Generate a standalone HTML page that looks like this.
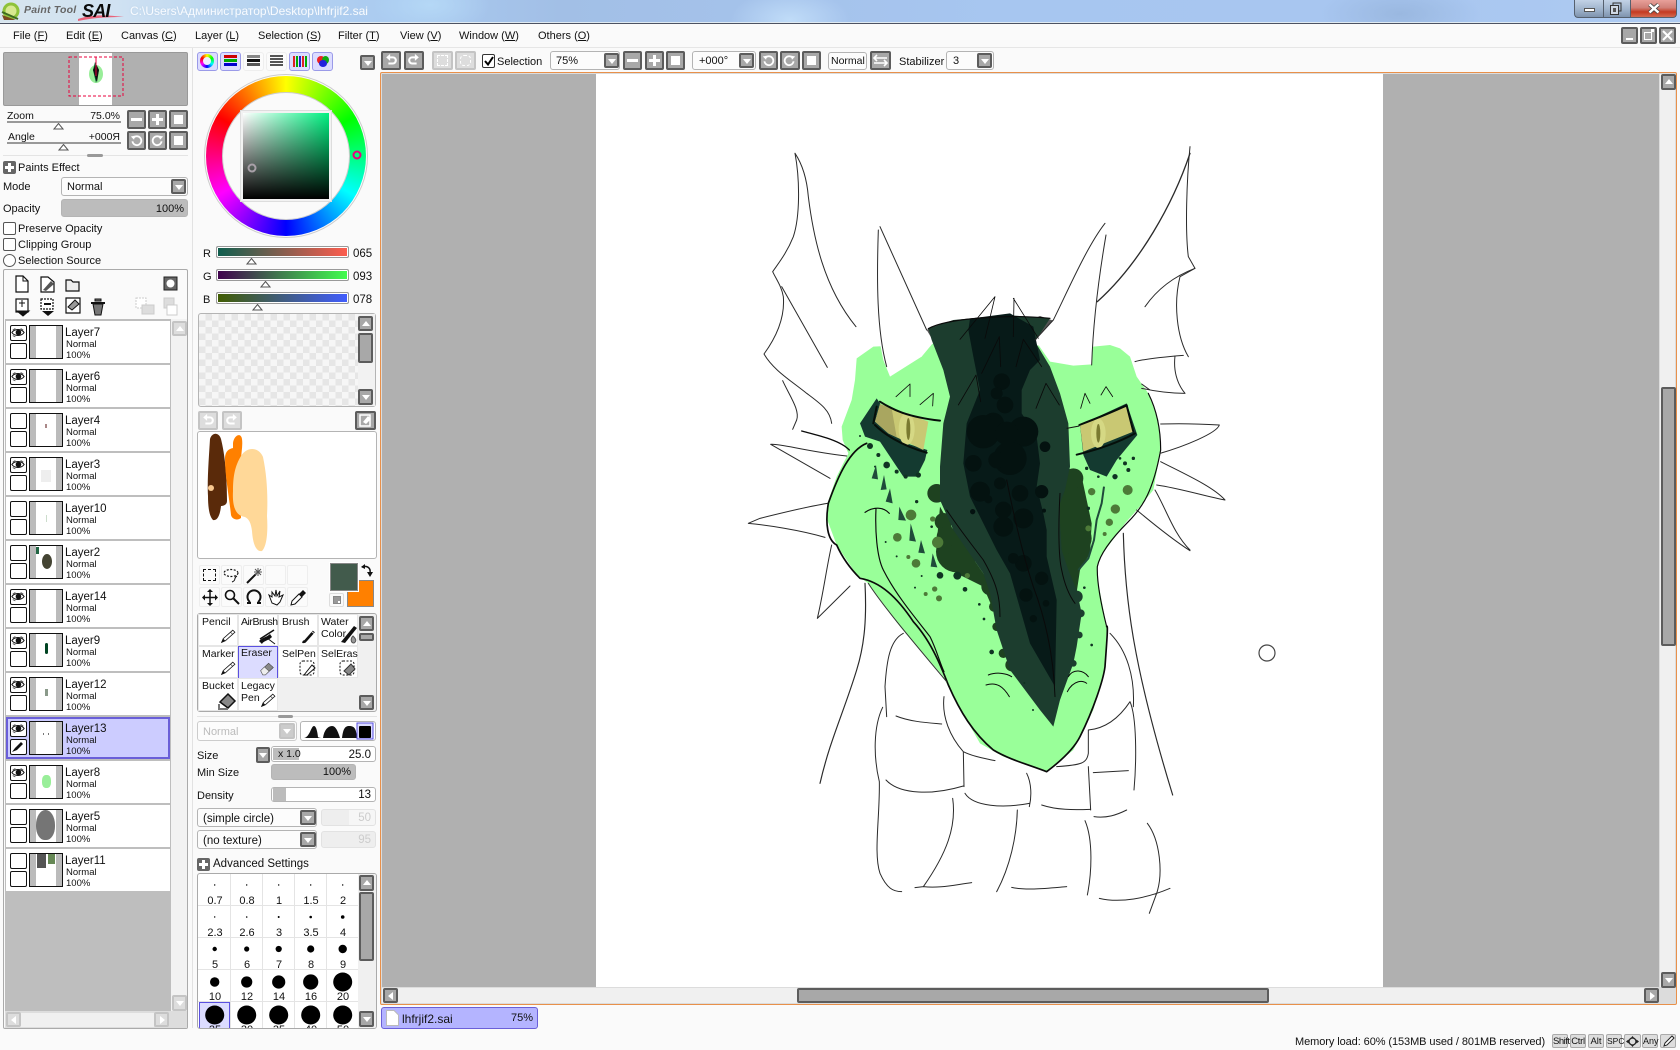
<!DOCTYPE html>
<html><head><meta charset="utf-8"><title>PaintTool SAI</title>
<style>
html,body{margin:0;padding:0;background:#fafafa}
#r{position:relative;width:1680px;height:1050px;overflow:hidden;background:#fafafa;font:11px/14px "Liberation Sans","Noto Sans CJK SC",sans-serif;color:#111}
#r div,#r span.a,#r svg.a{position:absolute;box-sizing:border-box}
.t{white-space:nowrap}
.b{background:#a8a8a8;border:2px solid #5c5c5c;border-radius:2px}
.g{background:#ddd;border:2px solid #c4c4c4;border-radius:2px}
.dn::after,.up::after,.lf::after,.rt::after{content:"";position:absolute;left:50%;top:50%;width:0;height:0}
.dn::after{margin:-2px 0 0 -4px;border:4px solid transparent;border-top:5px solid #fff;border-bottom:0}
.up::after{margin:-3px 0 0 -4px;border:4px solid transparent;border-bottom:5px solid #fff;border-top:0}
.lf::after{margin:-4px 0 0 -3px;border:4px solid transparent;border-right:5px solid #fff;border-left:0}
.rt::after{margin:-4px 0 0 -2px;border:4px solid transparent;border-left:5px solid #fff;border-right:0}
.f{background:#fcfcfc;border:1px solid #b4b4b4;border-radius:3px}
.m{top:29px;white-space:nowrap;height:14px}
.l{left:6px;width:164px;height:42px;background:#fff}
.l.s{background:#ccccff;border:2px solid #6a5fd8;outline:0}
.e{left:4px;top:4px;width:17px;height:16px;border:1.5px solid #111;border-radius:2px;background:#fff}
.e2{top:22px}
.th{left:23px;top:4px;width:34px;height:34px;border:1.5px solid #111;background:linear-gradient(90deg,#bbb 0 6px,#fff 6px 26px,#bbb 26px);overflow:hidden}
.n1{left:59px;top:5px;font-size:11.5px;white-space:nowrap}
.n2{left:60px;top:17px;font-size:9.5px;white-space:nowrap}
.n3{left:60px;top:28px;font-size:9.5px;white-space:nowrap}
.tool{background:#fbfbfb;border:1px solid #eee;border-radius:2px}
.cell{font-size:10.5px;line-height:12px;background:#fff;border:1px solid #e6e6e6;white-space:nowrap}
.sz{position:absolute;font-size:11px;width:32px;text-align:center;white-space:nowrap}
.kb{top:1034px;height:14px;font-size:9.5px;line-height:13px;text-align:center;background:#ddd;border:1px solid #aaa;border-radius:2px}
</style></head><body><div id="r">

<!-- title bar -->
<div style="left:0;top:0;width:1680px;height:23px;background:radial-gradient(60px 30px at 430px 5px,#b5d8f6,transparent),radial-gradient(80px 30px at 1400px 14px,#9ab8e0,transparent),radial-gradient(60px 30px at 790px 20px,#c0dcf8,transparent),linear-gradient(90deg,#d7e5ee 0,#d0e2f2 115px,#b8d4f0 240px,#a9caf0 400px,#a2bfe6 560px,#a7c6f0 1000px,#a8c6f0 1400px,#aecbf2 1680px)"></div>
<div style="left:0;top:22px;width:1680px;height:1px;background:#dfeaf2"></div>
<div style="left:0;top:23px;width:1680px;height:1px;background:#4c5262"></div>
<svg class="a" style="left:0;top:0" width="130" height="23"><circle cx="11" cy="11" r="8.5" fill="#8fc23a"/><circle cx="11" cy="11" r="5.5" fill="#d8e890"/><path d="M2 15L16 20L4 20Z" fill="#7a4a20"/><path d="M2 12L18 19" stroke="#3d6b20" stroke-width="2"/><path d="M78 19C92 14 108 15 124 17C106 17 92 18 78 21Z" fill="#e8637a"/></svg>
<div class="t" style="left:24px;top:3px;font-size:10.5px;font-style:italic;letter-spacing:.2px;color:#666;font-weight:bold">Paint Tool</div>
<div class="t" style="left:82px;top:1px;font-size:18px;line-height:20px;font-style:italic;font-weight:bold;color:#0a0a0a;letter-spacing:-.8px">SAI</div>
<div class="t" style="left:130px;top:4px;font-size:12px;color:#f8fbff;text-shadow:0 0 2px #b8d0e8">C:\Users\Администратор\Desktop\lhfrjif2.sai</div>

<!-- window controls -->
<div style="left:1574px;top:0;width:29px;height:18px;background:linear-gradient(#c2d2e6,#a0b4cc 55%,#7f94ae);border:1px solid #56606e;border-top:0;border-right:0;border-radius:0 0 0 4px"></div>
<div style="left:1603px;top:0;width:27px;height:18px;background:linear-gradient(#c2d2e6,#a0b4cc 55%,#7f94ae);border:1px solid #56606e;border-top:0;border-right:0"></div>
<div style="left:1630px;top:0;width:47px;height:18px;background:linear-gradient(#e8a09a,#d08078 45%,#c43a22 70%,#d46a50);border:1px solid #56606e;border-top:0;border-radius:0 0 4px 0"></div>
<div style="left:1584px;top:8px;width:11px;height:4px;background:#fff;border:1px solid #555"></div>
<svg class="a" style="left:1609px;top:2px" width="14" height="13"><rect x="4" y="1" width="8" height="8" fill="none" stroke="#333"/><rect x="1.5" y="3.5" width="8" height="9" fill="#cfd8e4" stroke="#333"/><rect x="4" y="6" width="3" height="4" fill="#555"/></svg>
<svg class="a" style="left:1648px;top:3px" width="12" height="11"><path d="M1.5 1.5L10.5 9.5M10.5 1.5L1.5 9.5" stroke="#444" stroke-width="4"/><path d="M1.5 1.5L10.5 9.5M10.5 1.5L1.5 9.5" stroke="#fff" stroke-width="2.4"/></svg>

<!-- menu -->
<div class="m" style="left:13px">File (<u>F</u>)</div>
<div class="m" style="left:66px">Edit (<u>E</u>)</div>
<div class="m" style="left:121px">Canvas (<u>C</u>)</div>
<div class="m" style="left:195px">Layer (<u>L</u>)</div>
<div class="m" style="left:258px">Selection (<u>S</u>)</div>
<div class="m" style="left:338px">Filter (<u>T</u>)</div>
<div class="m" style="left:400px">View (<u>V</u>)</div>
<div class="m" style="left:459px">Window (<u>W</u>)</div>
<div class="m" style="left:538px">Others (<u>O</u>)</div>
<div style="left:0;top:47px;width:1680px;height:1px;background:#e6e6e6"></div>
<div class="b" style="left:1621px;top:27px;width:17px;height:17px"><div style="left:3px;top:9px;width:7px;height:2px;background:#fff"></div></div>
<div class="b" style="left:1640px;top:27px;width:17px;height:17px"><div style="left:2px;top:3px;width:8px;height:8px;border:1.5px solid #fff"></div><div style="left:9px;top:0;width:3px;height:3px;background:#fff"></div></div>
<svg class="a" style="left:1659px;top:27px;border:2px solid #5c5c5c;border-radius:2px;background:#a8a8a8;width:17px;height:17px" viewBox="0 0 13 13"><path d="M2 2L11 11M11 2L2 11" stroke="#fff" stroke-width="2"/></svg>

<!-- top toolbar -->
<svg width="0" height="0" style="position:absolute"><defs>
<symbol id="ccw" viewBox="0 0 16 16"><path d="M4 5h6a3.5 3.5 0 0 1 0 7H5" fill="none" stroke="#fff" stroke-width="2.4"/><path d="M7 1L2.5 5L7 9Z" fill="#fff"/></symbol>
<symbol id="cw" viewBox="0 0 16 16"><path d="M12 5H6a3.5 3.5 0 0 0 0 7h5" fill="none" stroke="#fff" stroke-width="2.4"/><path d="M9 1L13.5 5L9 9Z" fill="#fff"/></symbol>
<symbol id="rl" viewBox="0 0 16 16"><path d="M4 5a5.5 5.5 0 1 1-1 4" fill="none" stroke="#fff" stroke-width="2.2"/><path d="M1 3L6 2L5 7Z" fill="#fff"/></symbol>
<symbol id="rr" viewBox="0 0 16 16"><path d="M12 5a5.5 5.5 0 1 0 1 4" fill="none" stroke="#fff" stroke-width="2.2"/><path d="M15 3L10 2L11 7Z" fill="#fff"/></symbol>
<symbol id="eye" viewBox="0 0 16 13"><path d="M1 6.5C4 2 12 2 15 6.5C12 11 4 11 1 6.5Z" fill="#fff" stroke="#111" stroke-width="1.2"/><circle cx="8.5" cy="6.5" r="3.2" fill="#111"/><path d="M2 3.5L5 2M14 3.5L11 2M2 10L5 11.5" stroke="#555"/></symbol>
<symbol id="pen" viewBox="0 0 34 30"><path d="M5 26L8 19L26 3L30 7L12 23Z" fill="#fff" stroke="#111" stroke-width="1.5"/><path d="M5 26L8 19L12 23Z" fill="#111"/><path d="M22 7L26 11" stroke="#111"/></symbol>
<symbol id="brs" viewBox="0 0 34 30"><path d="M6 27C6 24 8 22 10 22L26 4L30 7L14 25C12 28 8 28 6 27Z" fill="#111"/><path d="M24 6L28 9" stroke="#fff" stroke-width="1.5"/></symbol>
<symbol id="ers" viewBox="0 0 34 30"><path d="M5 20L20 6L29 14L14 28H9Z" fill="#888" stroke="#333"/><path d="M5 20L12 13L21 21L14 28H9Z" fill="#eee" stroke="#555"/></symbol>
</defs></svg>

<div class="b" style="left:381px;top:51px;width:20px;height:19px"><svg class="a" style="left:1px;top:0" width="14" height="14"><use href="#ccw"/></svg></div>
<div class="b" style="left:404px;top:51px;width:20px;height:19px"><svg class="a" style="left:1px;top:0" width="14" height="14"><use href="#cw"/></svg></div>
<div class="g" style="left:432px;top:51px;width:21px;height:19px"><div style="left:3px;top:2px;width:11px;height:11px;border:1px dashed #fff"></div></div>
<div class="g" style="left:455px;top:51px;width:21px;height:19px"><div style="left:3px;top:2px;width:11px;height:11px;border:1px dashed #fff;border-radius:4px"></div></div>
<div style="left:482px;top:54px;width:13px;height:14px;background:#fff;border:1px solid #333;border-radius:2px"><svg class="a" style="left:1px;top:1px" width="10" height="10"><path d="M1 5L4 8.5L9 1" fill="none" stroke="#000" stroke-width="2"/></svg></div>
<div class="t" style="left:497px;top:55px">Selection</div>
<div class="f" style="left:550px;top:51px;width:70px;height:19px;padding:2px 0 0 5px">75%</div>
<div class="b dn" style="left:604px;top:53px;width:15px;height:15px"></div>
<div class="b" style="left:623px;top:51px;width:19px;height:19px"><div style="left:2px;top:6px;width:11px;height:3px;background:#fff"></div></div>
<div class="b" style="left:645px;top:51px;width:19px;height:19px"><div style="left:2px;top:6px;width:11px;height:3px;background:#fff"></div><div style="left:6px;top:2px;width:3px;height:11px;background:#fff"></div></div>
<div class="b" style="left:666px;top:51px;width:19px;height:19px"><div style="left:3px;top:3px;width:9px;height:9px;background:#fff"></div></div>
<div class="f" style="left:692px;top:51px;width:64px;height:19px;padding:2px 0 0 6px">+000°</div>
<div class="b dn" style="left:739px;top:53px;width:15px;height:15px"></div>
<div class="b" style="left:759px;top:51px;width:19px;height:19px"><svg class="a" style="left:1px;top:1px" width="13" height="13"><use href="#rl"/></svg></div>
<div class="b" style="left:780px;top:51px;width:20px;height:19px"><svg class="a" style="left:1px;top:1px" width="13" height="13"><use href="#rr"/></svg></div>
<div class="b" style="left:802px;top:51px;width:19px;height:19px"><div style="left:3px;top:3px;width:9px;height:9px;background:#fff"></div></div>
<div class="f t" style="left:828px;top:52px;width:39px;height:18px;padding:1px 0 0 2px;font-size:10.5px">Normal</div>
<div class="b" style="left:870px;top:51px;width:21px;height:19px"><svg class="a" style="left:1px;top:1px" width="15" height="13"><path d="M1 4H14M1 9H14M4 1L1 4L4 7M11 6L14 9L11 12" fill="none" stroke="#fff" stroke-width="1.6"/></svg></div>
<div class="t" style="left:899px;top:55px">Stabilizer</div>
<div class="f" style="left:946px;top:51px;width:48px;height:19px;padding:2px 0 0 6px">3</div>
<div class="b dn" style="left:977px;top:53px;width:15px;height:15px"></div>

<!-- canvas frame -->
<div style="left:380px;top:72px;width:1297px;height:933px;border:1px solid #e8904a;background:#dcdcdc;border-radius:2px"></div>
<div style="left:382px;top:74px;width:1277px;height:913px;background:#b0b0b0"></div>
<div style="left:596px;top:74px;width:787px;height:913px;background:#fff"></div>

<!-- artwork -->
<svg class="a" style="left:740px;top:130px;overflow:visible;filter:blur(.3px)" width="520" height="800" viewBox="0 0 1560 2400">
<path fill="#99ff99" d="M350,685 L400,650 L600,640 L1060,650 L1110,645 L1140,655 L1170,680 L1190,740 L1225,790 L1255,870 L1262,960 L1240,1080 L1195,1135 L1155,1180 L1085,1275 L1072,1310 L1075,1360 L1100,1490 L1095,1610 L1060,1740 L1000,1860 L920,1925 L790,1880 L720,1840 L640,1700 L610,1640 L480,1490 L385,1360 L350,1335 L290,1245 L262,1170 L262,1120 L290,1040 L325,970 L308,930 L305,890 L335,810 L345,750Z"/>
<path fill="#fff" d="M418,290 L560,600 L578,640 L545,680 L450,740 L430,690 L412,600Z"/>
<path fill="#fff" d="M1095,280 L1040,350 L940,570 L885,630 L930,695 L1000,707 L1055,703 L1060,600 L1098,315Z"/>
<g fill="#1e4220"><path d="M600,1130L640,1200L730,1330L775,1400L782,1480L760,1440L730,1370L650,1330L590,1240Z"/><path d="M950,1020L1025,1040L1055,1180L1050,1270L1020,1320L1005,1420L965,1320Z"/><circle cx="650" cy="1265" r="62"/><circle cx="590" cy="1090" r="28"/><circle cx="610" cy="1175" r="26"/><circle cx="620" cy="1220" r="30"/><circle cx="750" cy="1370" r="26"/><circle cx="762" cy="1430" r="15"/><circle cx="770" cy="1490" r="13"/><circle cx="815" cy="1605" r="19"/><circle cx="790" cy="1570" r="14"/><circle cx="1005" cy="1225" r="50"/><circle cx="1000" cy="1045" r="30"/><circle cx="1000" cy="1130" r="25"/></g>
<g fill="#1c3d2e"><circle cx="1010" cy="1400" r="18"/><circle cx="1022" cy="1450" r="12"/><circle cx="1018" cy="1515" r="10"/><circle cx="1000" cy="1600" r="10"/></g>
<path fill="#555" d="M890,622 L940,572 L900,558 L870,570ZM560,600 L580,588 L578,630Z"/>
<path fill="#1c3d2e" d="M565,596 L640,570 L800,555 L930,565 L885,635 L930,710 L960,790 L985,880 L990,1010 L975,1080 L960,1120 L960,1180 L965,1260 L985,1320 L1010,1380 L1025,1450 L1010,1550 L1000,1600 L960,1710 L940,1790 L900,1740 L810,1620 L770,1500 L750,1390 L730,1330 L640,1200 L600,1110 L600,1010 L610,880 L630,800 L610,720 L575,630Z"/>
<path fill="#071a18" d="M690,566 L810,550 L880,590 L900,690 L870,720 L845,780 L845,850 L890,920 L900,1000 L890,1070 L910,1150 L920,1200 L920,1280 L950,1410 L945,1670 L870,1540 L810,1330 L770,1260 L720,1160 L690,1100 L670,1000 L680,880 L720,780 L700,680 L685,600Z"/>
<g fill="#041210"><circle cx="785" cy="755" r="25"/><circle cx="770" cy="790" r="18"/><circle cx="795" cy="825" r="25"/><circle cx="760" cy="880" r="32"/><circle cx="730" cy="905" r="50"/><circle cx="850" cy="905" r="45"/><circle cx="800" cy="910" r="35"/><circle cx="810" cy="985" r="50"/><circle cx="770" cy="990" r="25"/><circle cx="700" cy="1000" r="25"/><circle cx="720" cy="1085" r="30"/><circle cx="840" cy="1090" r="25"/><circle cx="905" cy="1085" r="20"/><circle cx="780" cy="1060" r="18"/><circle cx="790" cy="1140" r="25"/><circle cx="850" cy="1165" r="30"/><circle cx="790" cy="1190" r="30"/><circle cx="850" cy="1300" r="25"/><circle cx="820" cy="1285" r="16"/><circle cx="905" cy="1345" r="20"/><circle cx="858" cy="1395" r="20"/><circle cx="918" cy="1420" r="10"/><circle cx="880" cy="1466" r="11"/><circle cx="915" cy="950" r="16"/><circle cx="745" cy="1108" r="12"/><circle cx="698" cy="1145" r="8"/><circle cx="912" cy="1142" r="6"/></g>
<path fill="#143a30" d="M410,805 L360,880 L375,920 L420,935 L490,1040 L530,1040 L555,990 L562,960 L500,940Z"/>
<path fill="#143a30" d="M1160,820 L1192,915 L1130,990 L1100,1040 L1050,1020 L1030,975 L1020,885Z"/>
<path fill="#c9c873" d="M420,822 L565,875 L550,960 L445,910 L405,875Z"/>
<path fill="#a9a660" d="M420,822 L455,835 L470,922 L445,910 L405,875Z"/>
<ellipse cx="500" cy="897" rx="24" ry="48" fill="#d5d884"/><ellipse cx="505" cy="897" rx="6" ry="33" fill="#7a7a30"/>
<path fill="#c9c873" d="M1020,885 L1160,830 L1180,905 L1030,965Z"/>
<ellipse cx="1075" cy="910" rx="22" ry="44" fill="#d5d884"/><ellipse cx="1075" cy="910" rx="6" ry="28" fill="#7a7a30"/>
<g fill="none" stroke="#050f0a" stroke-width="6" stroke-linecap="round"><path d="M420,815C460,840 500,860 600,872"/><path d="M405,885C430,910 480,945 560,968"/><path d="M1018,885C1070,865 1120,845 1160,826"/><path d="M1010,974C1060,962 1130,940 1185,910"/><path d="M410,830L400,880M1160,826L1180,905"/></g>
<path d="M980,895L1018,888" stroke="#111" stroke-width="3"/>
<g fill="#4d7a38"><circle cx="513" cy="1155" r="16"/><circle cx="472" cy="1222" r="13"/><circle cx="593" cy="1237" r="17"/><circle cx="578" cy="1167" r="8"/><circle cx="528" cy="1300" r="13"/><circle cx="584" cy="1377" r="8"/><circle cx="597" cy="1405" r="9"/><circle cx="557" cy="1392" r="6"/><circle cx="505" cy="1281" r="6"/><circle cx="682" cy="1337" r="8"/><circle cx="1163" cy="1080" r="15"/><circle cx="1126" cy="1137" r="14"/><circle cx="1108" cy="1177" r="11"/><circle cx="1055" cy="1085" r="11"/><circle cx="1094" cy="1212" r="6"/><circle cx="1045" cy="1195" r="9"/></g>
<g fill="#0f3322"><circle cx="600" cy="1336" r="10"/><circle cx="652" cy="1337" r="12"/><circle cx="675" cy="1378" r="7"/><circle cx="755" cy="1566" r="7"/><circle cx="718" cy="1423" r="4"/><circle cx="732" cy="1467" r="4"/><circle cx="545" cy="1338" r="3"/><circle cx="525" cy="1373" r="3"/><circle cx="470" cy="1279" r="3"/><circle cx="437" cy="1236" r="3"/><circle cx="853" cy="1659" r="3"/><circle cx="879" cy="1740" r="3"/><circle cx="1033" cy="1373" r="4"/><circle cx="1055" cy="1545" r="4"/><circle cx="390" cy="948" r="9"/><circle cx="415" cy="975" r="6"/><circle cx="440" cy="1005" r="10"/><circle cx="470" cy="1025" r="6"/><circle cx="497" cy="1040" r="6"/><circle cx="360" cy="918" r="3"/><circle cx="405" cy="1010" r="3"/><circle cx="535" cy="1035" r="8"/><circle cx="1125" cy="1040" r="8"/><circle cx="1155" cy="1000" r="6"/><circle cx="1180" cy="985" r="5"/><circle cx="1140" cy="985" r="4"/><circle cx="1165" cy="1020" r="6"/><circle cx="1040" cy="1015" r="5"/><circle cx="1075" cy="1040" r="4"/><circle cx="1045" cy="1135" r="5"/><circle cx="530" cy="1115" r="5"/><circle cx="575" cy="1190" r="4"/></g>
<g fill="#1f4a3a"><path d="M395,1045L408,1005L414,1048Z"/><path d="M422,1080L432,1035L440,1078Z"/><path d="M437,1115L450,1075L458,1120Z"/><path d="M475,1170L478,1130L498,1172Z"/><path d="M508,1232L512,1180L528,1235Z"/><path d="M535,1268L543,1230L555,1270Z"/><path d="M572,1310L578,1270L592,1312Z"/></g>
<path d="M1092,1070L1085,1120L1070,1170L1062,1230L1045,1285L1015,1320" fill="none" stroke="#1f4a3a" stroke-width="6"/>
<g fill="none" stroke="#0a0a0a" stroke-width="5" stroke-linecap="round" stroke-linejoin="round">
<path d="M565,596C620,565 800,552 930,565" stroke-width="3.5"/>
<path d="M380,940C330,960 295,1035 265,1120C255,1180 262,1230 290,1245C310,1290 335,1320 360,1345C420,1355 470,1400 520,1475C570,1530 600,1600 625,1665C660,1745 700,1810 760,1860C810,1890 870,1905 920,1925C960,1895 1000,1860 1020,1820C1060,1740 1090,1650 1095,1610C1100,1540 1105,1480 1100,1490"/>
<path d="M1100,1490C1085,1430 1070,1360 1072,1310C1080,1270 1120,1220 1165,1175C1210,1130 1240,1080 1262,960C1262,900 1250,840 1225,790" stroke-width="3.5"/>
<path d="M375,1147C400,1130 430,1130 448,1150M408,1135C405,1200 410,1280 430,1320C470,1400 540,1480 570,1520C590,1560 600,1600 612,1625" stroke-width="3.5"/>
<path d="M385,1360C430,1430 540,1560 620,1655" stroke-width="3" stroke="#333"/>
<path d="M620,1140C660,1200 700,1250 730,1290C770,1360 780,1400 780,1460" stroke-width="3"/>
<path d="M960,1090C955,1180 955,1280 965,1320C975,1370 990,1400 1005,1420" stroke-width="3"/>
<path d="M800,1050C820,1150 850,1280 880,1370C910,1450 940,1560 945,1700" stroke-width="3"/>
<path d="M660,628L765,500L735,625M820,505L895,625M822,505L820,620M725,730L778,620L782,710M828,710L850,628L905,710M655,825L708,735L722,815M888,835L918,760L958,825" stroke-width="2.5"/>
<path d="M468,800L510,762L510,800M540,824L580,790L578,828M1022,835L1035,790L1050,820M1083,795L1098,770L1118,800" stroke-width="2.5"/>
<path d="M745,1635C770,1625 800,1630 815,1640M738,1665C770,1655 790,1670 808,1700M985,1640C1000,1615 1030,1620 1045,1640M982,1685C1000,1650 1030,1650 1040,1660" stroke-width="3"/>
<path d="M185,903C230,915 300,930 328,960" stroke-width="4"/>
</g>
<g fill="none" stroke="#2a2a2a" stroke-width="3" stroke-linecap="round" stroke-linejoin="round">
<path d="M165,70C185,100 200,140 205,200C220,320 250,470 348,590"/>
<path d="M165,70C180,150 180,260 160,320C140,370 115,400 98,425C110,450 125,470 130,500C135,560 110,620 72,672C100,720 150,750 200,790C240,820 270,840 275,880"/>
<path d="M125,470L262,712"/><path d="M128,752C150,800 180,840 170,870L158,898"/>
<path d="M92,943C120,940 200,965 320,978M92,943L270,1045"/>
<path d="M262,1120C200,1130 100,1155 60,1165L25,1180C80,1185 180,1200 255,1222"/>
<path d="M420,290L560,600M415,300C410,450 410,600 440,710"/>
<path d="M1350,50C1340,150 1335,300 1345,380L1365,415C1300,440 1250,480 1215,530"/>
<path d="M1350,70C1300,220 1200,400 1072,515" stroke-width="4"/>
<path d="M1365,415L1320,440C1300,520 1310,620 1345,680M1185,695C1220,685 1280,680 1330,676M1305,678C1300,720 1310,760 1335,790M1205,775C1250,785 1300,790 1335,790M1205,762L1230,780"/>
<path d="M1262,882C1320,880 1390,882 1438,885C1430,910 1330,950 1260,970M1262,995C1330,1030 1420,1070 1455,1110C1400,1100 1320,1075 1250,1065M1245,1080C1280,1140 1300,1210 1350,1260M1190,1140C1250,1190 1300,1230 1350,1262"/>
<path d="M1095,280C1040,350 980,490 940,570L885,630M1098,315C1080,420 1060,560 1055,705"/>
<path d="M275,1245C260,1310 250,1390 232,1465L330,1368"/>
<path d="M375,1360C380,1460 375,1540 350,1620C310,1750 270,1830 240,1960" stroke-width="3.5"/>
<path d="M1150,1210C1155,1410 1180,1610 1298,1995" stroke-width="3.5"/>
<path d="M490,1510C450,1530 440,1590 435,1670L440,1760M468,1758C510,1775 560,1778 605,1782M428,1732C400,1790 400,1880 418,1955C420,2060 400,2170 420,2230C440,2275 460,2285 485,2285"/>
<path d="M612,1700C605,1760 630,1820 670,1865L672,1970M670,1865C700,1880 735,1885 765,1892M438,1950C480,1995 580,1995 670,1968M675,1990C700,2030 790,2035 868,2020M860,1930C875,1960 875,2000 868,2030"/>
<path d="M1045,1800L1045,1870C1040,1900 1025,1905 950,1910M1045,1800C1100,1795 1140,1760 1170,1715C1190,1760 1190,1890 1182,1980M1110,1510C1160,1560 1185,1640 1180,1730M1060,1928L1165,1922M1045,1910L1052,2040M905,2025C950,2040 1000,2040 1050,2038M1062,2060C1100,2065 1130,2055 1160,2040"/>
<path d="M638,2005C650,2090 620,2170 550,2270C600,2275 640,2265 695,2258M525,2273L550,2270M832,2040C830,2120 810,2210 770,2285M815,2272C860,2282 920,2275 980,2270M1035,2072C1060,2130 1055,2230 1042,2295M1222,2080C1260,2130 1270,2230 1250,2290L1228,2350M1078,2305C1140,2320 1220,2305 1290,2275"/>
</g>
</svg>
<svg class="a" style="left:1257px;top:643px" width="20" height="20"><circle cx="10" cy="10" r="8" fill="none" stroke="#444" stroke-width="1.2"/></svg>

<!-- canvas scrollbars -->
<div style="left:1660px;top:74px;width:15px;height:913px;background:#f0f0f0"></div>
<div class="b up" style="left:1661px;top:74px;width:15px;height:16px"></div>
<div class="b" style="left:1661px;top:387px;width:15px;height:259px"></div>
<div class="b dn" style="left:1661px;top:972px;width:15px;height:16px"></div>
<div style="left:382px;top:988px;width:1277px;height:15px;background:#f0f0f0"></div>
<div class="b lf" style="left:383px;top:988px;width:15px;height:15px"></div>
<div class="b" style="left:797px;top:988px;width:472px;height:15px"></div>
<div class="b rt" style="left:1644px;top:988px;width:15px;height:15px"></div>

<!-- tab -->
<div style="left:381px;top:1007px;width:157px;height:22px;background:#b4b4ff;border:1px solid #6a5fd8;border-radius:3px"></div>
<svg class="a" style="left:386px;top:1010px" width="13" height="16"><path d="M.5 .5H8L12.5 5V15.5H.5Z" fill="#fff" stroke="#bbb"/></svg>
<div class="t" style="left:402px;top:1012px;font-size:12px">lhfrjif2.sai</div>
<div class="t" style="left:511px;top:1011px">75%</div>

<!-- status -->
<div class="t" style="left:1295px;top:1035px;font-size:11px;letter-spacing:-.08px">Memory load: 60% (153MB used / 801MB reserved)</div>
<div class="kb" style="left:1552px;width:16px;letter-spacing:-.5px">Shift</div>
<div class="kb" style="left:1570px;width:16px;letter-spacing:-.3px">Ctrl</div>
<div class="kb" style="left:1588px;width:16px">Alt</div>
<div class="kb" style="left:1606px;width:16px;font-size:8.5px">SPC</div>
<div class="kb" style="left:1624px;width:17px"><svg class="a" style="left:1px;top:1px" width="13" height="11"><circle cx="6.5" cy="5.5" r="3.5" fill="none" stroke="#222" stroke-width="1.3"/><path d="M6.5 0L4.500 2.500H8.500ZM6.500 11L4.500 8.500H8.500ZM0 5.500L2.500 3.500V7.500ZM13 5.500L10.500 3.500V7.500Z" fill="#222"/></svg></div>
<div class="kb" style="left:1642px;width:16px;font-size:9px">Any</div>
<div class="kb" style="left:1660px;width:16px"><svg class="a" style="left:1px;top:0" width="13" height="12"><path d="M2 11L3 8L10 1L12 3L5 10Z" fill="#fff" stroke="#222"/></svg></div>

<!-- left panel -->
<div style="left:192px;top:48px;width:1px;height:980px;background:#e2e2e2"></div>
<div style="left:3px;top:52px;width:185px;height:54px;background:#b0b0b0;border:1px solid #999;border-radius:2px"></div>
<div style="left:79px;top:53px;width:33px;height:52px;background:#fff"></div>
<svg class="a" style="left:68px;top:56px" width="58" height="42"><ellipse cx="28" cy="18" rx="7" ry="9" fill="#99ee99"/><path d="M27 6L25 14L28 27L31 14Z" fill="#063"/><path d="M28 8L25 14L29 26L31 14Z" fill="#111"/><rect x="1" y="1" width="54" height="39" fill="none" stroke="#e8003c" stroke-dasharray="3 2"/><path d="M28 1V20" stroke="#e8003c"/></svg>
<div class="t" style="left:7px;top:109px;font-size:10.5px">Zoom</div>
<div class="t" style="right:1560px;top:109px;font-size:10.5px">75.0%</div>
<div style="left:7px;top:121px;width:114px;height:2px;background:#999"></div>
<svg class="a" style="left:53px;top:123px" width="11" height="7"><path d="M5.5 .5L10 6H1Z" fill="#fff" stroke="#555"/></svg>
<div class="t" style="left:8px;top:130px;font-size:10.5px">Angle</div>
<div class="t" style="right:1560px;top:130px;font-size:10.5px">+000Я</div>
<div style="left:7px;top:142px;width:114px;height:2px;background:#999"></div>
<svg class="a" style="left:58px;top:144px" width="11" height="7"><path d="M5.5 .5L10 6H1Z" fill="#fff" stroke="#555"/></svg>
<div class="b" style="left:127px;top:110px;width:19px;height:19px"><div style="left:2px;top:6px;width:11px;height:3px;background:#fff"></div></div>
<div class="b" style="left:148px;top:110px;width:19px;height:19px"><div style="left:2px;top:6px;width:11px;height:3px;background:#fff"></div><div style="left:6px;top:2px;width:3px;height:11px;background:#fff"></div></div>
<div class="b" style="left:169px;top:110px;width:19px;height:19px"><div style="left:3px;top:3px;width:9px;height:9px;background:#fff"></div></div>
<div class="b" style="left:127px;top:131px;width:19px;height:19px"><svg class="a" style="left:1px;top:1px" width="13" height="13"><use href="#rl"/></svg></div>
<div class="b" style="left:148px;top:131px;width:19px;height:19px"><svg class="a" style="left:1px;top:1px" width="13" height="13"><use href="#rr"/></svg></div>
<div class="b" style="left:169px;top:131px;width:19px;height:19px"><div style="left:3px;top:3px;width:9px;height:9px;background:#fff"></div></div>
<div style="left:3px;top:155px;width:185px;height:1px;background:#e4e4e4"></div>
<div style="left:87px;top:154px;width:16px;height:3px;background:#999;border-radius:2px"></div>
<div style="left:3px;top:161px;width:13px;height:13px;background:#666;border-radius:2px"><div style="left:2px;top:5px;width:9px;height:3px;background:#fff"></div><div style="left:5px;top:2px;width:3px;height:9px;background:#fff"></div></div>
<div class="t" style="left:18px;top:161px">Paints Effect</div>
<div class="t" style="left:3px;top:180px">Mode</div>
<div class="f" style="left:61px;top:177px;width:127px;height:19px;padding:2px 0 0 5px">Normal</div>
<div class="b dn" style="left:171px;top:179px;width:15px;height:15px"></div>
<div class="t" style="left:3px;top:202px">Opacity</div>
<div class="f" style="left:61px;top:199px;width:127px;height:18px;background:#bcbcbc;text-align:right;padding:2px 3px 0 0">100%</div>
<div style="left:3px;top:222px;width:13px;height:13px;background:#fff;border:1px solid #555;border-radius:2px"></div>
<div class="t" style="left:18px;top:222px">Preserve Opacity</div>
<div style="left:3px;top:238px;width:13px;height:13px;background:#fff;border:1px solid #555;border-radius:2px"></div>
<div class="t" style="left:18px;top:238px">Clipping Group</div>
<div style="left:3px;top:254px;width:13px;height:13px;background:#fff;border:1px solid #555;border-radius:50%"></div>
<div class="t" style="left:18px;top:254px">Selection Source</div>

<!-- layer panel -->
<div style="left:3px;top:269px;width:185px;height:760px;border:1px solid #aaa;border-radius:2px;background:#fafafa"></div>
<svg class="a" style="left:14px;top:275px" width="170" height="42">
<path d="M2 1H9L14 6V17H2Z" fill="#fff" stroke="#111" stroke-width="1.2"/><path d="M9 1V6H14" fill="none" stroke="#111"/>
<path d="M27 2H34L40 7V17H27Z" fill="#fff" stroke="#111" stroke-width="1.2"/><path d="M29 15L37 6L40 9L32 16Z" fill="#555"/>
<path d="M52 5H57L59 7H65V16H52Z" fill="#eee" stroke="#111" stroke-width="1.2"/>
<rect x="150" y="2" width="13" height="13" fill="#666" stroke="#222"/><circle cx="156.5" cy="8.5" r="4" fill="#fff"/>
<rect x="2" y="24" width="12" height="13" fill="#fff" stroke="#111" stroke-width="1.2"/><path d="M5 28H11M8 25V32M3 36H15L9 41Z" fill="#111" stroke="#111"/>
<rect x="27" y="24" width="12" height="10" fill="#fff" stroke="#111" stroke-width="1.2" stroke-dasharray="2 1"/><path d="M28 36H40L34 41Z" fill="#111"/><path d="M30 29H37" stroke="#111" stroke-width="2"/>
<path d="M52 23H66V38H52Z" fill="#fff" stroke="#111" stroke-width="1.2"/><path d="M54 32L61 25L65 29L58 35Z" fill="#999" stroke="#111"/>
<path d="M77 28H91" stroke="#111" stroke-width="2"/><path d="M81 26H87V24H81ZM79 29H89L87 40H81Z" fill="#777" stroke="#111"/>
<rect x="122" y="23" width="10" height="10" fill="#fff" stroke="#ccc" stroke-dasharray="2 1"/><rect x="128" y="30" width="12" height="9" fill="#ddd" stroke="#ccc"/>
<rect x="150" y="23" width="10" height="10" fill="#ddd" stroke="#ccc"/><rect x="153" y="30" width="10" height="10" fill="#fff" stroke="#ccc"/>
</svg>
<div style="left:5px;top:319px;width:166px;height:692px;background:#bebebe"></div>
<div style="left:171px;top:319px;width:16px;height:692px;background:#f2f2f2"></div>
<div class="g up" style="left:172px;top:321px;width:15px;height:15px"></div>
<div class="g dn" style="left:172px;top:995px;width:15px;height:16px"></div>
<div style="left:5px;top:1011px;width:182px;height:17px;background:#ddd"></div>
<div style="left:20px;top:1013px;width:134px;height:14px;background:#f0f0f0"></div>
<div class="g lf" style="left:6px;top:1012px;width:15px;height:15px"></div>
<div class="g rt" style="left:154px;top:1012px;width:15px;height:15px"></div>

<div class="l" style="top:321px"><div class="e"><svg class="a" style="left:0;top:0" width="14" height="13"><use href="#eye"/></svg></div><div class="e e2"></div><div class="th"></div><div class="n1">Layer7</div><div class="n2">Normal</div><div class="n3">100%</div></div>
<div class="l" style="top:365px"><div class="e"><svg class="a" style="left:0;top:0" width="14" height="13"><use href="#eye"/></svg></div><div class="e e2"></div><div class="th"></div><div class="n1">Layer6</div><div class="n2">Normal</div><div class="n3">100%</div></div>
<div class="l" style="top:409px"><div class="e"></div><div class="e e2"></div><div class="th"><div style="left:15px;top:10px;width:2px;height:4px;background:#a88"></div></div><div class="n1">Layer4</div><div class="n2">Normal</div><div class="n3">100%</div></div>
<div class="l" style="top:453px"><div class="e"><svg class="a" style="left:0;top:0" width="14" height="13"><use href="#eye"/></svg></div><div class="e e2"></div><div class="th"><div style="left:11px;top:12px;width:10px;height:12px;background:#eee"></div></div><div class="n1">Layer3</div><div class="n2">Normal</div><div class="n3">100%</div></div>
<div class="l" style="top:497px"><div class="e"></div><div class="e e2"></div><div class="th"><div style="left:16px;top:13px;width:1px;height:7px;background:#cdc"></div></div><div class="n1">Layer10</div><div class="n2">Normal</div><div class="n3">100%</div></div>
<div class="l" style="top:541px"><div class="e"></div><div class="e e2"></div><div class="th"><div style="left:12px;top:8px;width:10px;height:15px;background:#443;border-radius:50%"></div><div style="left:6px;top:1px;width:3px;height:7px;background:#264"></div></div><div class="n1">Layer2</div><div class="n2">Normal</div><div class="n3">100%</div></div>
<div class="l" style="top:585px"><div class="e"><svg class="a" style="left:0;top:0" width="14" height="13"><use href="#eye"/></svg></div><div class="e e2"></div><div class="th"></div><div class="n1">Layer14</div><div class="n2">Normal</div><div class="n3">100%</div></div>
<div class="l" style="top:629px"><div class="e"><svg class="a" style="left:0;top:0" width="14" height="13"><use href="#eye"/></svg></div><div class="e e2"></div><div class="th"><div style="left:15px;top:9px;width:3px;height:11px;background:#042;border-radius:2px"></div></div><div class="n1">Layer9</div><div class="n2">Normal</div><div class="n3">100%</div></div>
<div class="l" style="top:673px"><div class="e"><svg class="a" style="left:0;top:0" width="14" height="13"><use href="#eye"/></svg></div><div class="e e2"></div><div class="th"><div style="left:15px;top:11px;width:3px;height:7px;background:#8a9a8a"></div></div><div class="n1">Layer12</div><div class="n2">Normal</div><div class="n3">100%</div></div>
<div class="l s" style="top:717px;left:6px"><div class="e" style="left:2px;top:2px"><svg class="a" style="left:0;top:0" width="14" height="13"><use href="#eye"/></svg></div><div class="e" style="left:2px;top:20px"><svg class="a" style="left:0;top:0" width="14" height="13"><path d="M1 12L4 8L10 2L12 4L6 10Z" fill="#111"/></svg></div><div class="th" style="left:21px;top:2px"><div style="left:13px;top:11px;width:1px;height:2px;background:#777"></div><div style="left:18px;top:11px;width:1px;height:2px;background:#777"></div></div><div class="n1" style="left:57px;top:3px">Layer13</div><div class="n2" style="left:58px;top:15px">Normal</div><div class="n3" style="left:58px;top:26px">100%</div></div>
<div class="l" style="top:761px"><div class="e"><svg class="a" style="left:0;top:0" width="14" height="13"><use href="#eye"/></svg></div><div class="e e2"></div><div class="th"><div style="left:12px;top:9px;width:9px;height:13px;background:#99ee99;border-radius:40%"></div></div><div class="n1">Layer8</div><div class="n2">Normal</div><div class="n3">100%</div></div>
<div class="l" style="top:805px"><div class="e"></div><div class="e e2"></div><div class="th"><div style="left:6px;top:0;width:19px;height:30px;background:#757575;border-radius:50% 50% 45% 45%"></div></div><div class="n1">Layer5</div><div class="n2">Normal</div><div class="n3">100%</div></div>
<div class="l" style="top:849px"><div class="e"></div><div class="e e2"></div><div class="th"><div style="left:7px;top:0;width:9px;height:14px;background:#555"></div><div style="left:18px;top:0;width:7px;height:10px;background:#685"></div></div><div class="n1">Layer11</div><div class="n2">Normal</div><div class="n3">100%</div></div>

<!-- colour panel -->
<div style="left:197px;top:52px;width:21px;height:19px;background:#dcdcff;border:1px solid #9a9ae8;border-radius:3px"><div style="left:2px;top:1px;width:14px;height:14px;border-radius:50%;background:conic-gradient(#ff0,#0f0,#0ff,#00f,#f0f,#f00,#ff0)"></div><div style="left:5px;top:4px;width:8px;height:8px;border-radius:50%;background:#eef"></div></div>
<div style="left:220px;top:52px;width:21px;height:19px;background:#dcdcff;border:1px solid #9a9ae8;border-radius:3px"><div style="left:3px;top:2px;width:13px;height:3px;background:#c00"></div><div style="left:3px;top:6px;width:13px;height:3px;background:#0a0"></div><div style="left:3px;top:10px;width:13px;height:3px;background:#00c"></div></div>
<div style="left:243px;top:52px;width:21px;height:19px;background:#fbfbfb;border:1px solid #eee;border-radius:3px"><div style="left:3px;top:2px;width:13px;height:3px;background:#888"></div><div style="left:3px;top:6px;width:13px;height:3px;background:#111"></div><div style="left:3px;top:10px;width:13px;height:3px;background:#555"></div></div>
<div style="left:266px;top:52px;width:21px;height:19px;background:#fbfbfb;border:1px solid #eee;border-radius:3px"><div style="left:3px;top:2px;width:13px;height:2px;background:#555"></div><div style="left:3px;top:5px;width:13px;height:2px;background:#555"></div><div style="left:3px;top:8px;width:13px;height:2px;background:#555"></div><div style="left:3px;top:11px;width:13px;height:2px;background:#555"></div></div>
<div style="left:289px;top:52px;width:21px;height:19px;background:#dcdcff;border:1px solid #9a9ae8;border-radius:3px"><div style="left:3px;top:3px;width:14px;height:11px;background:repeating-linear-gradient(90deg,#d22 0 2px,transparent 2px 3px,#0a0 3px 5px,transparent 5px 6px,#22c 6px 8px,transparent 8px 9px)"></div></div>
<div style="left:312px;top:52px;width:21px;height:19px;background:#dcdcff;border:1px solid #9a9ae8;border-radius:3px"><div style="left:4px;top:3px;width:8px;height:8px;border-radius:50%;background:#e22"></div><div style="left:9px;top:3px;width:7px;height:8px;border-radius:50%;background:#1a1"></div><div style="left:6px;top:7px;width:8px;height:7px;border-radius:50%;background:#22d"></div></div>
<div class="b dn" style="left:360px;top:55px;width:15px;height:15px"></div>

<div style="left:204px;top:74px;width:164px;height:164px;border-radius:50%;background:#fafafa;border:1px solid #ccc"></div>
<div style="left:206px;top:76px;width:160px;height:160px;border-radius:50%;background:conic-gradient(#ff0 0deg,#0f0 60deg,#0ff 120deg,#00f 180deg,#f0f 240deg,#f00 300deg,#ff0 360deg)"></div>
<div style="left:222px;top:92px;width:128px;height:128px;border-radius:50%;background:#fafafa;border:1px solid #ccc"></div>
<div style="left:241px;top:111px;width:90px;height:90px;background:linear-gradient(to top,#000,rgba(0,0,0,0)),linear-gradient(to right,#fff,#00f080);border:2px solid #f2f2f2;outline:1px solid #ddd"></div>
<svg class="a" style="left:240px;top:140px" width="125" height="36"><circle cx="117" cy="15" r="3.5" fill="none" stroke="#e6007e" stroke-width="2"/><circle cx="12" cy="28" r="3.5" fill="none" stroke="#a8a0a8" stroke-width="2"/></svg>

<div class="t" style="left:203px;top:247px">R</div>
<div style="left:216px;top:246px;width:133px;height:12px;border:1px solid #999;border-radius:2px;background:linear-gradient(90deg,#0d5e4e,#ff5d4e);box-shadow:inset 0 0 0 1px #fff"></div>
<div class="t" style="left:353px;top:247px;font-size:11.5px">065</div>
<svg class="a" style="left:246px;top:258px" width="11" height="7"><path d="M5.5 .5L10 6H1Z" fill="#fff" stroke="#555"/></svg>
<div class="t" style="left:203px;top:270px">G</div>
<div style="left:216px;top:269px;width:133px;height:12px;border:1px solid #999;border-radius:2px;background:linear-gradient(90deg,#41004e,#41ff4e);box-shadow:inset 0 0 0 1px #fff"></div>
<div class="t" style="left:353px;top:270px;font-size:11.5px">093</div>
<svg class="a" style="left:260px;top:281px" width="11" height="7"><path d="M5.5 .5L10 6H1Z" fill="#fff" stroke="#555"/></svg>
<div class="t" style="left:203px;top:293px">B</div>
<div style="left:216px;top:292px;width:133px;height:12px;border:1px solid #999;border-radius:2px;background:linear-gradient(90deg,#415d00,#415dff);box-shadow:inset 0 0 0 1px #fff"></div>
<div class="t" style="left:353px;top:293px;font-size:11.5px">078</div>
<svg class="a" style="left:252px;top:304px" width="11" height="7"><path d="M5.5 .5L10 6H1Z" fill="#fff" stroke="#555"/></svg>

<!-- swatches -->
<div style="left:198px;top:313px;width:178px;height:94px;border:1px solid #b4b4b4;border-radius:3px;background-color:#f6f6f6;background-image:repeating-conic-gradient(#e6e6e6 0 25%,#f6f6f6 0 50%);background-size:13px 13px"></div>
<div style="left:358px;top:314px;width:17px;height:92px;background:#f2f2f2"></div>
<div class="b up" style="left:358px;top:316px;width:15px;height:15px"></div>
<div class="b" style="left:358px;top:333px;width:15px;height:30px"></div>
<div class="b dn" style="left:358px;top:389px;width:15px;height:16px"></div>
<div class="g" style="left:198px;top:411px;width:20px;height:19px"><svg class="a" style="left:1px;top:0" width="14" height="14"><use href="#ccw"/></svg></div>
<div class="g" style="left:222px;top:411px;width:20px;height:19px"><svg class="a" style="left:1px;top:0" width="14" height="14"><use href="#cw"/></svg></div>
<div class="b" style="left:355px;top:411px;width:21px;height:19px"><svg class="a" style="left:1px;top:0" width="15" height="15"><path d="M2 2H12V13H2Z" fill="none" stroke="#fff" stroke-width="1.5"/><path d="M5 9L10 3L13 6L8 11Z" fill="#fff"/></svg></div>

<!-- scratch pad -->
<div style="left:197px;top:431px;width:180px;height:128px;background:#fff;border:1px solid #b4b4b4;border-radius:3px"></div>
<svg class="a" style="left:197px;top:431px" width="180" height="128">
<path d="M13 8C15 1 22 1 24 8C27 20 30 40 30 70C30 74 26 75 24 75C23 85 20 90 16 89C12 85 11 75 11 65C10 50 12 25 13 8Z" fill="#5a2a0a"/>
<circle cx="14" cy="57" r="3" fill="#f8c890"/>
<path d="M36 12C37 4 44 1 45 8C46 15 44 22 44 30L44 87C40 90 35 88 34 84C32 65 28 45 28 28C28 20 32 18 36 17Z" fill="#ff8000"/>
<path d="M44 25C50 15 62 16 66 26C70 45 71 65 70 85C71 100 70 115 65 120C60 121 56 115 55 100C54 92 52 88 48 86C40 85 35 78 36 60C36 45 38 35 44 25Z" fill="#ffd898"/>
</svg>

<!-- tools -->
<div class="tool" style="left:199px;top:565px;width:21px;height:20px"><div style="left:3px;top:3px;width:13px;height:12px;border:1.5px dashed #111"></div></div>
<div class="tool" style="left:221px;top:565px;width:21px;height:20px"><svg class="a" style="left:1px;top:1px" width="18" height="17"><ellipse cx="8" cy="6" rx="7" ry="3.5" fill="none" stroke="#111" stroke-dasharray="2 1.5" stroke-width="1.2"/><path d="M14 9C10 11 14 13 9 15" fill="none" stroke="#111"/></svg></div>
<div class="tool" style="left:243px;top:565px;width:21px;height:20px"><svg class="a" style="left:1px;top:1px" width="18" height="17"><path d="M2 16L11 7" stroke="#111" stroke-width="2"/><path d="M13 1V9M9 5H17M10 2L16 8M16 2L10 8" stroke="#555"/></svg></div>
<div class="tool" style="left:265px;top:565px;width:21px;height:20px"></div>
<div class="tool" style="left:287px;top:565px;width:21px;height:20px"></div>
<div class="tool" style="left:199px;top:587px;width:21px;height:20px"><svg class="a" style="left:1px;top:1px" width="18" height="17"><path d="M9 1V16M2 8.5H16" stroke="#111" stroke-width="1.5"/><path d="M9 0L6 3H12ZM9 17L6 14H12ZM1 8.5L4 5.5V11.5ZM17 8.5L14 5.5V11.5Z" fill="#111"/></svg></div>
<div class="tool" style="left:221px;top:587px;width:21px;height:20px"><svg class="a" style="left:1px;top:1px" width="18" height="17"><circle cx="7" cy="6" r="4.5" fill="none" stroke="#111" stroke-width="1.6"/><path d="M10.5 9.5L16 15" stroke="#111" stroke-width="2"/></svg></div>
<div class="tool" style="left:243px;top:587px;width:21px;height:20px"><svg class="a" style="left:1px;top:1px" width="18" height="17"><path d="M5 13A6.5 6.5 0 1 1 13 13" fill="none" stroke="#111" stroke-width="2"/><path d="M2 14H6M12 14H16" stroke="#111" stroke-width="2"/></svg></div>
<div class="tool" style="left:265px;top:587px;width:21px;height:20px"><svg class="a" style="left:1px;top:1px" width="18" height="17"><path d="M5 14L2 6L5 8L5 3L8 7L9 1L10 7L13 2L12 8L16 6L13 13L10 16Z" fill="#fff" stroke="#111" stroke-width="1"/></svg></div>
<div class="tool" style="left:287px;top:587px;width:21px;height:20px"><svg class="a" style="left:1px;top:1px" width="18" height="17"><path d="M2 16L3 12L10 5L13 8L6 15Z" fill="#fff" stroke="#111"/><path d="M10 5L14 1L17 4L13 8Z" fill="#111"/></svg></div>
<div style="left:330px;top:563px;width:28px;height:28px;background:#425b4c;border:1.5px solid #888;outline:1px solid #fff;z-index:2"></div>
<div style="left:347px;top:580px;width:27px;height:27px;background:#ff8000;border:1px solid #888"></div>
<svg class="a" style="left:360px;top:564px" width="14" height="14"><path d="M2 3C7 1 11 4 10 9" fill="none" stroke="#111" stroke-width="1.5"/><path d="M1 3L5 0V5ZM10 13L7 8H13Z" fill="#111"/></svg>
<div style="left:329px;top:593px;width:15px;height:14px;background:#fafafa;border:1px solid #ddd;border-radius:2px"><div style="left:3px;top:2px;width:8px;height:8px;background:#fff;border:1px solid #888;box-shadow:inset 4px 4px 0 #999"></div></div>

<!-- brush palette -->
<div style="left:197px;top:613px;width:180px;height:99px;border:1px solid #aaa;border-radius:3px;background:#f0f0f0"></div>
<div class="cell" style="left:198px;top:614px;width:40px;height:32px"><span class="a" style="left:3px;top:1px">Pencil</span><svg class="a" style="left:20px;top:13px" width="18" height="17"><use href="#pen"/></svg></div>
<div class="cell" style="left:238px;top:614px;width:40px;height:32px"><span class="a" style="left:2px;top:1px;letter-spacing:-.45px">AirBrush</span><svg class="a" style="left:18px;top:14px" width="20" height="16"><path d="M3 10L17 1" stroke="#111" stroke-width="1.5"/><path d="M2 12C6 8 10 8 13 5L15 8C11 12 6 12 5 15Z" fill="#111"/><path d="M10 9L18 15" stroke="#111"/></svg></div>
<div class="cell" style="left:278px;top:614px;width:40px;height:32px"><span class="a" style="left:3px;top:1px">Brush</span><svg class="a" style="left:20px;top:13px" width="18" height="17"><use href="#brs"/></svg></div>
<div class="cell" style="left:318px;top:614px;width:40px;height:32px"><span class="a" style="left:2px;top:1px;line-height:12px">Water<br>Color</span><svg class="a" style="left:20px;top:9px" width="19" height="21"><path d="M2 18L15 2L18 4L6 19Z" fill="#111"/><path d="M14 12C17 15 18 17 15 19C12 19 11 15 14 12Z" fill="#999" stroke="#555"/></svg></div>
<div class="cell" style="left:198px;top:646px;width:40px;height:32px"><span class="a" style="left:3px;top:1px">Marker</span><svg class="a" style="left:20px;top:13px" width="18" height="17"><use href="#pen"/></svg></div>
<div class="cell" style="left:238px;top:646px;width:40px;height:33px;background:#dcdcff;border:1.5px solid #5a50e0"><span class="a" style="left:2px;top:0">Eraser</span><svg class="a" style="left:19px;top:13px" width="18" height="16"><use href="#ers"/></svg></div>
<div class="cell" style="left:278px;top:646px;width:40px;height:32px"><span class="a" style="left:3px;top:1px">SelPen</span><svg class="a" style="left:20px;top:13px" width="18" height="17"><rect x="1" y="1" width="14" height="14" rx="3" fill="none" stroke="#111" stroke-dasharray="2 1.5"/><path d="M5 15L13 5L16 8L8 15Z" fill="#fff" stroke="#111"/></svg></div>
<div class="cell" style="left:318px;top:646px;width:40px;height:32px"><span class="a" style="left:2px;top:1px">SelEras</span><svg class="a" style="left:20px;top:13px" width="18" height="17"><rect x="1" y="1" width="14" height="14" rx="3" fill="none" stroke="#111" stroke-dasharray="2 1.5"/><path d="M5 11L12 4L16 9L10 15Z" fill="#888" stroke="#333"/></svg></div>
<div class="cell" style="left:198px;top:678px;width:40px;height:33px"><span class="a" style="left:3px;top:1px">Bucket</span><svg class="a" style="left:19px;top:12px" width="20" height="19"><path d="M2 11L10 3L17 10L10 17Z" fill="#888" stroke="#111" stroke-width="1.5"/><path d="M1 13V18H10" fill="none" stroke="#777" stroke-width="2"/></svg></div>
<div class="cell" style="left:238px;top:678px;width:40px;height:33px"><span class="a" style="left:2px;top:1px;line-height:12px">Legacy<br>Pen</span><svg class="a" style="left:20px;top:13px" width="18" height="17"><use href="#pen"/></svg></div>
<div class="b up" style="left:359px;top:616px;width:15px;height:15px"></div>
<div class="b" style="left:359px;top:633px;width:15px;height:8px"></div>
<div class="b dn" style="left:359px;top:695px;width:15px;height:15px"></div>
<div style="left:197px;top:716px;width:180px;height:1px;background:#e4e4e4"></div>
<div style="left:278px;top:715px;width:15px;height:3px;background:#999;border-radius:2px"></div>

<!-- brush options -->
<div class="f" style="left:197px;top:721px;width:100px;height:20px;padding:3px 0 0 5px;color:#bbb;border-color:#ccc">Normal</div>
<div class="g dn" style="left:279px;top:723px;width:16px;height:16px;background:#ccc"></div>
<div class="f" style="left:300px;top:721px;width:76px;height:20px;background:#fff"></div>
<svg class="a" style="left:302px;top:722px" width="72" height="18"><path d="M2 16C8 15 9 4 12 4C15 4 16 15 16 15C17 16 20 16 20 16Z" fill="#111"/><path d="M21 16C22 8 26 4 30 4C34 4 36 10 38 16Z" fill="#111"/><path d="M40 16C41 7 43 4 47 4C53 4 54 7 55 16Z" fill="#111"/><rect x="55" y="1" width="16" height="16" fill="#dcdcff" stroke="#5a50e0" stroke-width="1"/><rect x="57" y="4" width="12" height="12" rx="1" fill="#000"/></svg>
<div class="t" style="left:197px;top:749px">Size</div>
<div class="b dn" style="left:256px;top:747px;width:14px;height:16px"></div>
<div class="f" style="left:271px;top:746px;width:105px;height:16px;background:#fff"><div style="left:1px;top:1px;width:26px;height:12px;background:#bcbcbc"></div></div>
<div class="t" style="left:278px;top:747px;font-size:10.5px">x 1.0</div>
<div class="t" style="right:1309px;top:748px;font-size:11.5px">25.0</div>
<div class="t" style="left:197px;top:766px">Min Size</div>
<div class="f" style="left:271px;top:764px;width:85px;height:16px;background:#bcbcbc;text-align:right;padding:0 4px 0 0;line-height:14px">100%</div>
<div class="t" style="left:197px;top:789px">Density</div>
<div class="f" style="left:271px;top:787px;width:105px;height:15px;background:#fff"><div style="left:1px;top:0;width:13px;height:13px;background:#bcbcbc"></div></div>
<div class="t" style="right:1309px;top:788px;font-size:11.5px">13</div>
<div class="f" style="left:197px;top:808px;width:120px;height:19px;padding:3px 0 0 5px;font-size:11.5px">(simple circle)</div>
<div class="b dn" style="left:300px;top:810px;width:16px;height:15px"></div>
<div style="left:321px;top:809px;width:55px;height:17px;background:linear-gradient(90deg,#eee 0 27px,#f6f6f6 27px);border:1px solid #e2e2e2;border-radius:3px;color:#ccc;text-align:right;padding:1px 4px;line-height:15px;font-size:11.5px">50</div>
<div class="f" style="left:197px;top:830px;width:120px;height:19px;padding:3px 0 0 5px;font-size:11.5px">(no texture)</div>
<div class="b dn" style="left:300px;top:832px;width:16px;height:15px"></div>
<div style="left:321px;top:831px;width:55px;height:17px;background:#eee;border:1px solid #e2e2e2;border-radius:3px;color:#ccc;text-align:right;padding:1px 4px;line-height:15px;font-size:11.5px">95</div>
<div style="left:197px;top:858px;width:13px;height:13px;background:#666;border-radius:2px"><div style="left:2px;top:5px;width:9px;height:3px;background:#fff"></div><div style="left:5px;top:2px;width:3px;height:9px;background:#fff"></div></div>
<div class="t" style="left:213px;top:857px;font-size:11.5px">Advanced Settings</div>

<!-- brush sizes -->
<div style="left:197px;top:873px;width:180px;height:156px;border:1px solid #aaa;border-radius:3px;background:#fff;overflow:hidden">
<div style="left:160px;top:0;width:18px;height:154px;background:#f0f0f0"></div>
<div style="left:0;top:31px;width:160px;height:1px;background:#e4e4e4"></div>
<div style="left:0;top:63px;width:160px;height:1px;background:#e4e4e4"></div>
<div style="left:0;top:95px;width:160px;height:1px;background:#e4e4e4"></div>
<div style="left:0;top:127px;width:160px;height:1px;background:#e4e4e4"></div>
<div style="left:32px;top:0;width:1px;height:154px;background:#e4e4e4"></div>
<div style="left:64px;top:0;width:1px;height:154px;background:#e4e4e4"></div>
<div style="left:96px;top:0;width:1px;height:154px;background:#e4e4e4"></div>
<div style="left:128px;top:0;width:1px;height:154px;background:#e4e4e4"></div>
<div style="left:1px;top:128px;width:31px;height:28px;background:#dcdcff;border:1px solid #5a50e0"></div>
<svg class="a" style="left:0;top:0" width="160" height="154" fill="#000">
<circle cx="16.7" cy="11" r=".7"/><circle cx="48.7" cy="11" r=".7"/><circle cx="80.7" cy="11" r=".7"/><circle cx="112.7" cy="11" r=".7"/><circle cx="144.7" cy="11" r=".7"/>
<circle cx="16.7" cy="43" r=".7"/><circle cx="48.7" cy="43" r=".8"/><circle cx="80.7" cy="43" r="1"/><circle cx="112.7" cy="43" r="1.3"/><circle cx="144.7" cy="43" r="1.8"/>
<circle cx="16.7" cy="75" r="2.2"/><circle cx="48.7" cy="75" r="2.6"/><circle cx="80.7" cy="75" r="3.1"/><circle cx="112.7" cy="75" r="3.6"/><circle cx="144.7" cy="75" r="4.2"/>
<circle cx="16.7" cy="108" r="4.7"/><circle cx="48.7" cy="108" r="5.6"/><circle cx="80.7" cy="108" r="6.6"/><circle cx="112.7" cy="108" r="7.6"/><circle cx="144.7" cy="108" r="9.5"/>
<circle cx="16.7" cy="141" r="9.5"/><circle cx="48.7" cy="141" r="9.5"/><circle cx="80.7" cy="141" r="9.5"/><circle cx="112.7" cy="141" r="9.5"/><circle cx="144.7" cy="141" r="9.5"/>
</svg>
<span class="sz" style="left:1px;top:20px">0.7</span><span class="sz" style="left:33px;top:20px">0.8</span><span class="sz" style="left:65px;top:20px">1</span><span class="sz" style="left:97px;top:20px">1.5</span><span class="sz" style="left:129px;top:20px">2</span>
<span class="sz" style="left:1px;top:52px">2.3</span><span class="sz" style="left:33px;top:52px">2.6</span><span class="sz" style="left:65px;top:52px">3</span><span class="sz" style="left:97px;top:52px">3.5</span><span class="sz" style="left:129px;top:52px">4</span>
<span class="sz" style="left:1px;top:84px">5</span><span class="sz" style="left:33px;top:84px">6</span><span class="sz" style="left:65px;top:84px">7</span><span class="sz" style="left:97px;top:84px">8</span><span class="sz" style="left:129px;top:84px">9</span>
<span class="sz" style="left:1px;top:116px">10</span><span class="sz" style="left:33px;top:116px">12</span><span class="sz" style="left:65px;top:116px">14</span><span class="sz" style="left:97px;top:116px">16</span><span class="sz" style="left:129px;top:116px">20</span>
<span class="sz" style="left:1px;top:149px">25</span><span class="sz" style="left:33px;top:149px">30</span><span class="sz" style="left:65px;top:149px">35</span><span class="sz" style="left:97px;top:149px">40</span><span class="sz" style="left:129px;top:149px">50</span>
</div>
<div class="b up" style="left:359px;top:875px;width:15px;height:16px"></div>
<div class="b" style="left:359px;top:892px;width:15px;height:69px"></div>
<div class="b dn" style="left:359px;top:1011px;width:15px;height:16px"></div>

</div></body></html>
